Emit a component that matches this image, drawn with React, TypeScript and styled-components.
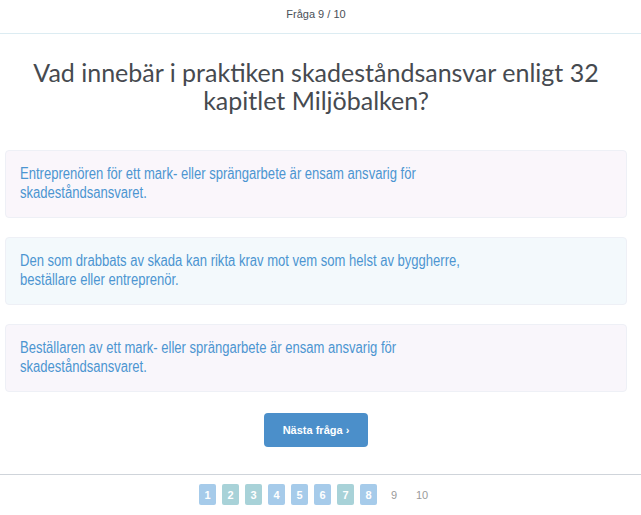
import styled, { createGlobalStyle } from "styled-components";

const GlobalStyle = createGlobalStyle`
  html, body {
    margin: 0;
    padding: 0;
    background: #ffffff;
  }
  body {
    font-family: "Liberation Sans", Arial, sans-serif;
  }
`;

const Page = styled.div`
  width: 641px;
  min-height: 515px;
  display: flex;
  flex-direction: column;
`;

const Counter = styled.div`
  height: 34px;
  display: flex;
  align-items: center;
  justify-content: center;
  padding: 0 9px 5px 0;
  box-sizing: border-box;
  font-size: 11px;
  color: #4a4f57;
  border-bottom: 1px solid #dcecf2;
`;

const Main = styled.div`
  width: 632px;
  display: flex;
  flex-direction: column;
`;

const Question = styled.h1`
  margin: 24px 20px 0;
  font-family: Lato, "Open Sans", sans-serif;
  font-weight: 400;
  font-size: 25px;
  line-height: 28px;
  color: #464a50;
  text-align: center;
`;

const Answers = styled.div`
  display: flex;
  flex-direction: column;
  gap: 19px;
  margin: 36px 5px 0 5px;
`;

const Answer = styled.div<{ $tint: string }>`
  height: 68px;
  box-sizing: border-box;
  padding: 13px 14px;
  border-radius: 4px;
  background: ${(p) => p.$tint};
  border: 1px solid #eef0f6;
  overflow: hidden;
  cursor: pointer;
`;

/* the reference face is a narrow sans; squeeze the Arial-metric one to match */
const AnswerText = styled.div`
  width: 600px;
  transform: scaleX(0.815);
  transform-origin: left top;
  font-family: "Liberation Sans", Arial, sans-serif;
  font-size: 16px;
  line-height: 19px;
  color: #4c95d1;
`;

const ButtonRow = styled.div`
  display: flex;
  justify-content: center;
  margin-top: 21px;
`;

const NextButton = styled.button`
  width: 104px;
  height: 34px;
  border: none;
  border-radius: 4px;
  background: #4b8fca;
  color: #ffffff;
  font-family: "Liberation Sans", Arial, sans-serif;
  font-weight: 700;
  font-size: 11px;
  cursor: pointer;
`;

const Footer = styled.div`
  margin-top: 27px;
  border-top: 1px solid #cfd4da;
  display: flex;
  justify-content: center;
  gap: 6px;
  padding: 9px 9px 0 0;
`;

const PageDot = styled.span<{ $done: boolean; $green?: boolean }>`
  width: ${(p) => (p.$done ? "17px" : "22px")};
  height: 21px;
  display: flex;
  align-items: center;
  justify-content: center;
  border-radius: 2px;
  font-size: 11px;
  font-weight: ${(p) => (p.$done ? 700 : 400)};
  color: ${(p) => (p.$done ? "#ffffff" : "#9a9a9a")};
  background: ${(p) =>
    p.$done ? (p.$green ? "#a8d2d8" : "#a6cbea") : "transparent"};
`;

const answers = [
  {
    text: "Entreprenören för ett mark- eller sprängarbete är ensam ansvarig för skadeståndsansvaret.",
    tint: "#faf6fb",
  },
  {
    text: "Den som drabbats av skada kan rikta krav mot vem som helst av byggherre, beställare eller entreprenör.",
    tint: "#f3f9fc",
  },
  {
    text: "Beställaren av ett mark- eller sprängarbete är ensam ansvarig för skadeståndsansvaret.",
    tint: "#f9f6fb",
  },
];

const pages = [1, 2, 3, 4, 5, 6, 7, 8, 9, 10];
const greenPages = [2, 3, 7];

export default function App() {
  return (
    <>
      <GlobalStyle />
      <Page>
        <Counter>Fråga 9 / 10</Counter>
        <Main>
          <Question>
            Vad innebär i praktiken skadeståndsansvar enligt 32 kapitlet
            Miljöbalken?
          </Question>
          <Answers>
            {answers.map((a) => (
              <Answer key={a.text} $tint={a.tint}>
                <AnswerText>{a.text}</AnswerText>
              </Answer>
            ))}
          </Answers>
          <ButtonRow>
            <NextButton>Nästa fråga ›</NextButton>
          </ButtonRow>
        </Main>
        <Footer>
          {pages.map((n) => (
            <PageDot key={n} $done={n < 9} $green={greenPages.includes(n)}>
              {n}
            </PageDot>
          ))}
        </Footer>
      </Page>
    </>
  );
}
